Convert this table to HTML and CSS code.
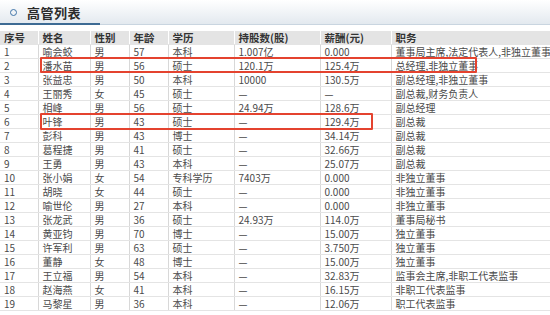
FILE: index.html
```html
<!DOCTYPE html>
<html lang="zh-CN">
<head>
    <meta charset="UTF-8">
    <title>高管列表</title>
    <link rel="stylesheet" href="styles.css">
</head>
<body>
    <div class="panel-title">
        <span class="dot"></span>
        <h4>高管列表</h4>
    </div>
    <div class="table-wrap">
        <table class="exec-table">
            <colgroup>
                <col style="width:38px"><col style="width:52px"><col style="width:39px"><col style="width:39px">
                <col style="width:66px"><col style="width:86px"><col style="width:71px"><col>
            </colgroup>
            <thead>
                <tr><th>序号</th><th>姓名</th><th>性别</th><th>年龄</th><th>学历</th><th>持股数(股)</th><th>薪酬(元)</th><th>职务</th></tr>
            </thead>
            <tbody>
                <tr><td>1</td><td>喻会蛟</td><td>男</td><td>57</td><td>本科</td><td>1.007亿</td><td>0.000</td><td>董事局主席,法定代表人,非独立董事</td></tr>
                <tr><td>2</td><td>潘水苗</td><td>男</td><td>56</td><td>硕士</td><td>120.1万</td><td>125.4万</td><td>总经理,非独立董事</td></tr>
                <tr><td>3</td><td>张益忠</td><td>男</td><td>50</td><td>本科</td><td>10000</td><td>130.5万</td><td>副总经理,非独立董事</td></tr>
                <tr><td>4</td><td>王丽秀</td><td>女</td><td>45</td><td>硕士</td><td>—</td><td>—</td><td>副总裁,财务负责人</td></tr>
                <tr><td>5</td><td>相峰</td><td>男</td><td>56</td><td>硕士</td><td>24.94万</td><td>128.6万</td><td>副总经理</td></tr>
                <tr><td>6</td><td>叶锋</td><td>男</td><td>43</td><td>硕士</td><td>—</td><td>129.4万</td><td>副总裁</td></tr>
                <tr><td>7</td><td>彭科</td><td>男</td><td>43</td><td>博士</td><td>—</td><td>34.14万</td><td>副总裁</td></tr>
                <tr><td>8</td><td>葛程捷</td><td>男</td><td>41</td><td>硕士</td><td>—</td><td>32.66万</td><td>副总裁</td></tr>
                <tr><td>9</td><td>王勇</td><td>男</td><td>43</td><td>本科</td><td>—</td><td>25.07万</td><td>副总裁</td></tr>
                <tr><td>10</td><td>张小娟</td><td>女</td><td>54</td><td>专科学历</td><td>7403万</td><td>0.000</td><td>非独立董事</td></tr>
                <tr><td>11</td><td>胡晓</td><td>女</td><td>44</td><td>硕士</td><td>—</td><td>0.000</td><td>非独立董事</td></tr>
                <tr><td>12</td><td>喻世伦</td><td>男</td><td>27</td><td>本科</td><td>—</td><td>0.000</td><td>非独立董事</td></tr>
                <tr><td>13</td><td>张龙武</td><td>男</td><td>36</td><td>硕士</td><td>24.93万</td><td>114.0万</td><td>董事局秘书</td></tr>
                <tr><td>14</td><td>黄亚钧</td><td>男</td><td>70</td><td>博士</td><td>—</td><td>15.00万</td><td>独立董事</td></tr>
                <tr><td>15</td><td>许军利</td><td>男</td><td>63</td><td>硕士</td><td>—</td><td>3.750万</td><td>独立董事</td></tr>
                <tr><td>16</td><td>董静</td><td>女</td><td>48</td><td>博士</td><td>—</td><td>15.00万</td><td>独立董事</td></tr>
                <tr><td>17</td><td>王立福</td><td>男</td><td>54</td><td>本科</td><td>—</td><td>32.83万</td><td>监事会主席,非职工代表监事</td></tr>
                <tr><td>18</td><td>赵海燕</td><td>女</td><td>41</td><td>本科</td><td>—</td><td>16.15万</td><td>非职工代表监事</td></tr>
                <tr><td>19</td><td>马黎星</td><td>男</td><td>36</td><td>本科</td><td>—</td><td>12.06万</td><td>职工代表监事</td></tr>
            </tbody>
        </table>
        <div class="mark mark-row2"></div>
        <div class="mark mark-row6"></div>
    </div>
</body>
</html>
```

FILE: styles.css
```css
body {
    margin: 0;
    font-family: "Noto Sans CJK SC", "Liberation Sans", sans-serif;
    color: #333;
    background: #fff;
    width: 550px;
    height: 315px;
    overflow: hidden;
}

.panel-title {
    height: 24px;
    display: flex;
    align-items: center;
    background: linear-gradient(#ffffff, #e3e9ef);
    border-bottom: 1px solid #c9d5e0;
    position: relative;
}

.panel-title::after {
    content: "";
    position: absolute;
    left: 0;
    bottom: -1px;
    width: 100px;
    height: 2px;
    background: #3d6b94;
}

.panel-title .dot {
    width: 5px;
    height: 5px;
    border: 1.5px solid #3f74a8;
    border-radius: 50%;
    margin: 0 10px 0 10px;
}

.panel-title h4 {
    margin: 0;
    font-size: 13px;
    font-weight: bold;
    color: #2b2b2b;
    letter-spacing: 0.5px;
}

.table-wrap {
    position: relative;
    margin-top: 6px;
}

.exec-table {
    width: 550px;
    border-collapse: collapse;
    table-layout: fixed;
    font-size: 10px;
}

.exec-table th,
.exec-table td {
    height: 13px;
    padding: 0 0 0 4px;
    line-height: 13px;
    text-align: left;
    white-space: nowrap;
    overflow: hidden;
    border-bottom: 1px solid #e4e4e4;
    border-left: 1px solid #d8d8d8;
}

.exec-table th:first-child,
.exec-table td:first-child {
    border-left: none;
}

.exec-table th {
    background: #e4e4e4;
    font-weight: bold;
    font-size: 10.5px;
    color: #333;
    border-left-color: #fff;
}

.exec-table td {
    color: #4a4a4a;
}

.mark {
    position: absolute;
    border: 2px solid #e4432f;
    border-radius: 1px;
}

.mark-row2 {
    left: 40px;
    top: 26px;
    width: 433px;
    height: 12px;
}

.mark-row6 {
    left: 40px;
    top: 82px;
    width: 329px;
    height: 13px;
}
```
